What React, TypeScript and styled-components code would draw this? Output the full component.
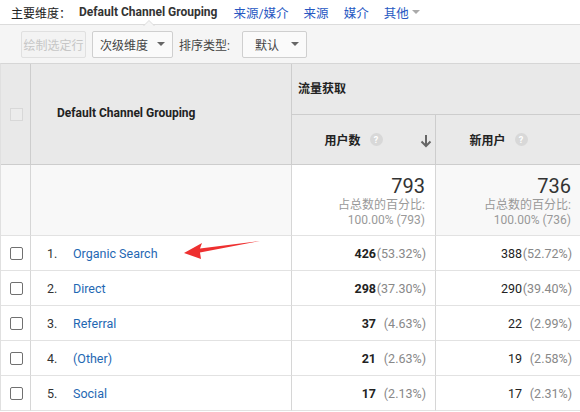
import React from 'react';
import styled, { createGlobalStyle } from 'styled-components';

const GlobalStyle = createGlobalStyle`
    html, body {
        margin: 0;
        padding: 0;
        background: #fff;
    }
    body {
        font-family: Roboto, "Noto Sans CJK SC", Arial, sans-serif;
        color: #333;
    }
`;

const Page = styled.div`
    position: relative;
    width: 580px;
    height: 412px;
    overflow: hidden;
`;

const TopBar = styled.div`
    height: 25px;
    display: flex;
    align-items: center;
    padding-left: 11px;
    font-size: 12px;
    border-bottom: 1px solid #dcdcdc;
    box-sizing: border-box;
`;

const DimLabel = styled.span`
    color: #222;
    margin-right: 8px;
`;

const ActiveDim = styled.span`
    position: relative;
    font-weight: 700;
    color: #333;
    margin-right: 16px;
    height: 25px;
    line-height: 24px;

    &::before,
    &::after {
        content: '';
        position: absolute;
        left: 64px;
        width: 0;
        height: 0;
        border-left: 6px solid transparent;
        border-right: 6px solid transparent;
    }
    &::before {
        bottom: -1px;
        border-bottom: 6px solid #dcdcdc;
    }
    &::after {
        bottom: -2px;
        border-bottom: 6px solid #f5f5f5;
    }
`;

const DimLink = styled.a`
    color: #2757c2;
    font-size: 12.5px;
    margin-right: 15px;
    text-decoration: none;
    display: flex;
    align-items: center;
`;

const SmallCaret = styled.span`
    display: inline-block;
    margin-left: 3px;
    border-left: 4px solid transparent;
    border-right: 4px solid transparent;
    border-top: 4px solid #aaa;
`;

const ToolBar = styled.div`
    height: 38px;
    background: #f5f5f5;
    display: flex;
    align-items: center;
    padding-left: 21px;
    box-sizing: border-box;
    gap: 6px;
`;

const Button = styled.div<{ $disabled?: boolean; $width: number }>`
    width: ${p => p.$width}px;
    height: 27px;
    box-sizing: border-box;
    border: 1px solid ${p => (p.$disabled ? '#e0e0e0' : '#cfcfcf')};
    border-radius: 2px;
    background: ${p => (p.$disabled ? '#f3f3f3' : '#fafafa')};
    color: ${p => (p.$disabled ? '#c6c6c6' : '#444')};
    font-size: 12px;
    white-space: nowrap;
    display: flex;
    align-items: center;
    padding: 0 ${p => (p.$disabled ? 0 : 7)}px;
    justify-content: ${p => (p.$disabled ? 'center' : 'space-between')};
`;

const Caret = styled.span`
    display: inline-block;
    border-left: 4px solid transparent;
    border-right: 4px solid transparent;
    border-top: 4px solid #666;
`;

const ToolLabel = styled.span`
    font-size: 12px;
    color: #444;
    margin-right: 6px;
`;

const Table = styled.div`
    display: grid;
    grid-template-columns: 30px 261px 144px 145px;
    grid-template-rows: 51px 50px 71px repeat(5, 35px);
    border-top: 1px solid #d6d6d6;
    border-left: 1px solid #e0e0e0;
    box-sizing: border-box;
`;

const HeadCell = styled.div<{ $rows?: number; $cols?: number }>`
    grid-row: span ${p => p.$rows || 1};
    grid-column: span ${p => p.$cols || 1};
    background: #e9e9e9;
    border-right: 1px solid #cdcdcd;
    border-bottom: 1px solid #cdcdcd;
    display: flex;
    align-items: center;
    font-size: 12px;
    font-weight: 700;
    color: #222;
    box-sizing: border-box;
`;

const DimHead = styled(HeadCell)`
    padding-left: 26px;
    padding-bottom: 2px;
`;

const GroupHead = styled(HeadCell)`
    padding-left: 6px;
    padding-bottom: 4px;
    border-right: none;
`;

const MetricHead = styled(HeadCell)<{ $last?: boolean }>`
    position: relative;
    justify-content: center;
    border-right: ${p => (p.$last ? 'none' : '1px solid #cdcdcd')};
    padding-right: 20px;
`;

const Help = styled.span`
    display: inline-flex;
    align-items: center;
    justify-content: center;
    width: 13px;
    height: 13px;
    border-radius: 50%;
    background: #d8d8d8;
    color: #fff;
    font-size: 9px;
    font-weight: 700;
    margin-left: 9px;
`;

const SortArrow = styled.svg`
    position: absolute;
    right: 3px;
    top: 19px;
`;

const BoxHead = styled.span`
    width: 13px;
    height: 13px;
    border: 1px solid #d8d8d8;
    background: #ececec;
    box-sizing: border-box;
    margin-left: 9px;
`;

const TotalCell = styled.div<{ $white?: boolean; $last?: boolean }>`
    background: ${p => (p.$white ? '#fff' : '#f8f8f8')};
    border-right: ${p => (p.$last ? 'none' : '1px solid #d6d6d6')};
    border-bottom: 1px solid #e2e2e2;
    display: flex;
    flex-direction: column;
    align-items: flex-end;
    padding: 9px 10px 0 0;
    box-sizing: border-box;
`;

const TotalValue = styled.div`
    font-size: 20px;
    color: #333;
    line-height: 24px;
`;

const TotalSub = styled.div`
    font-size: 12px;
    color: #999;
    text-align: right;
    line-height: 15px;
`;

const Cell = styled.div<{ $divider?: boolean }>`
    display: flex;
    align-items: center;
    border-bottom: 1px solid #e2e2e2;
    border-right: ${p => (p.$divider ? '1px solid #d6d6d6' : 'none')};
    box-sizing: border-box;
    font-size: 12.5px;
    background: #fff;
`;

const Check = styled.span`
    width: 13px;
    height: 13px;
    border: 1px solid #707070;
    border-radius: 2px;
    box-sizing: border-box;
    margin-left: 9px;
`;

const Index = styled.span`
    width: 26px;
    margin-left: 16px;
    color: #333;
`;

const RowLink = styled.a`
    color: #1f68b3;
    text-decoration: none;
`;

const ValueCell = styled(Cell)`
    justify-content: flex-end;
    padding-right: 9px;
`;

const Value = styled.span<{ $bold?: boolean }>`
    font-weight: ${p => (p.$bold ? 700 : 400)};
    color: #222;
`;

const Pct = styled.span`
    width: 50px;
    text-align: right;
    color: #888;
`;

const Annotation = styled.svg`
    position: absolute;
    left: 0;
    top: 0;
    pointer-events: none;
`;

const rows = [
    { name: 'Organic Search', users: '426', usersPct: '(53.32%)', newUsers: '388', newPct: '(52.72%)' },
    { name: 'Direct', users: '298', usersPct: '(37.30%)', newUsers: '290', newPct: '(39.40%)' },
    { name: 'Referral', users: '37', usersPct: '(4.63%)', newUsers: '22', newPct: '(2.99%)' },
    { name: '(Other)', users: '21', usersPct: '(2.63%)', newUsers: '19', newPct: '(2.58%)' },
    { name: 'Social', users: '17', usersPct: '(2.13%)', newUsers: '17', newPct: '(2.31%)' },
];

const App = () => {
    return (
        <Page>
            <GlobalStyle />
            <TopBar>
                <DimLabel>主要维度：</DimLabel>
                <ActiveDim>Default Channel Grouping</ActiveDim>
                <DimLink>来源/媒介</DimLink>
                <DimLink>来源</DimLink>
                <DimLink>媒介</DimLink>
                <DimLink>
                    其他<SmallCaret />
                </DimLink>
            </TopBar>
            <ToolBar>
                <Button $disabled $width={65}>绘制选定行</Button>
                <Button $width={81}>
                    次级维度 <Caret />
                </Button>
                <ToolLabel>排序类型:</ToolLabel>
                <Button $width={65}>
                    <span style={{ marginLeft: 5 }}>默认</span> <Caret />
                </Button>
            </ToolBar>
            <Table>
                <HeadCell $rows={2}>
                    <BoxHead />
                </HeadCell>
                <DimHead $rows={2}>Default Channel Grouping</DimHead>
                <GroupHead $cols={2}>流量获取</GroupHead>
                <MetricHead>
                    用户数<Help>?</Help>
                    <SortArrow width="12" height="14" viewBox="0 0 12 14">
                        <path d="M6 1v11M1.5 7.5L6 12l4.5-4.5" stroke="#666" strokeWidth="2" fill="none" />
                    </SortArrow>
                </MetricHead>
                <MetricHead $last>
                    新用户<Help>?</Help>
                </MetricHead>

                <TotalCell />
                <TotalCell />
                <TotalCell $white>
                    <TotalValue>793</TotalValue>
                    <TotalSub>占总数的百分比:</TotalSub>
                    <TotalSub>100.00% (793)</TotalSub>
                </TotalCell>
                <TotalCell $last>
                    <TotalValue>736</TotalValue>
                    <TotalSub>占总数的百分比:</TotalSub>
                    <TotalSub>100.00% (736)</TotalSub>
                </TotalCell>

                {rows.map((r, i) => (
                    <React.Fragment key={r.name}>
                        <Cell $divider>
                            <Check />
                        </Cell>
                        <Cell $divider>
                            <Index>{i + 1}.</Index>
                            <RowLink>{r.name}</RowLink>
                        </Cell>
                        <ValueCell $divider>
                            <Value $bold>{r.users}</Value>
                            <Pct>{r.usersPct}</Pct>
                        </ValueCell>
                        <ValueCell>
                            <Value>{r.newUsers}</Value>
                            <Pct>{r.newPct}</Pct>
                        </ValueCell>
                    </React.Fragment>
                ))}
            </Table>
            <Annotation width="580" height="412">
                <polygon points="184,253 202,243 200,248.5 260,241 200,252.5 201,259" fill="#ee3030" />
            </Annotation>
        </Page>
    );
};

export default App;
